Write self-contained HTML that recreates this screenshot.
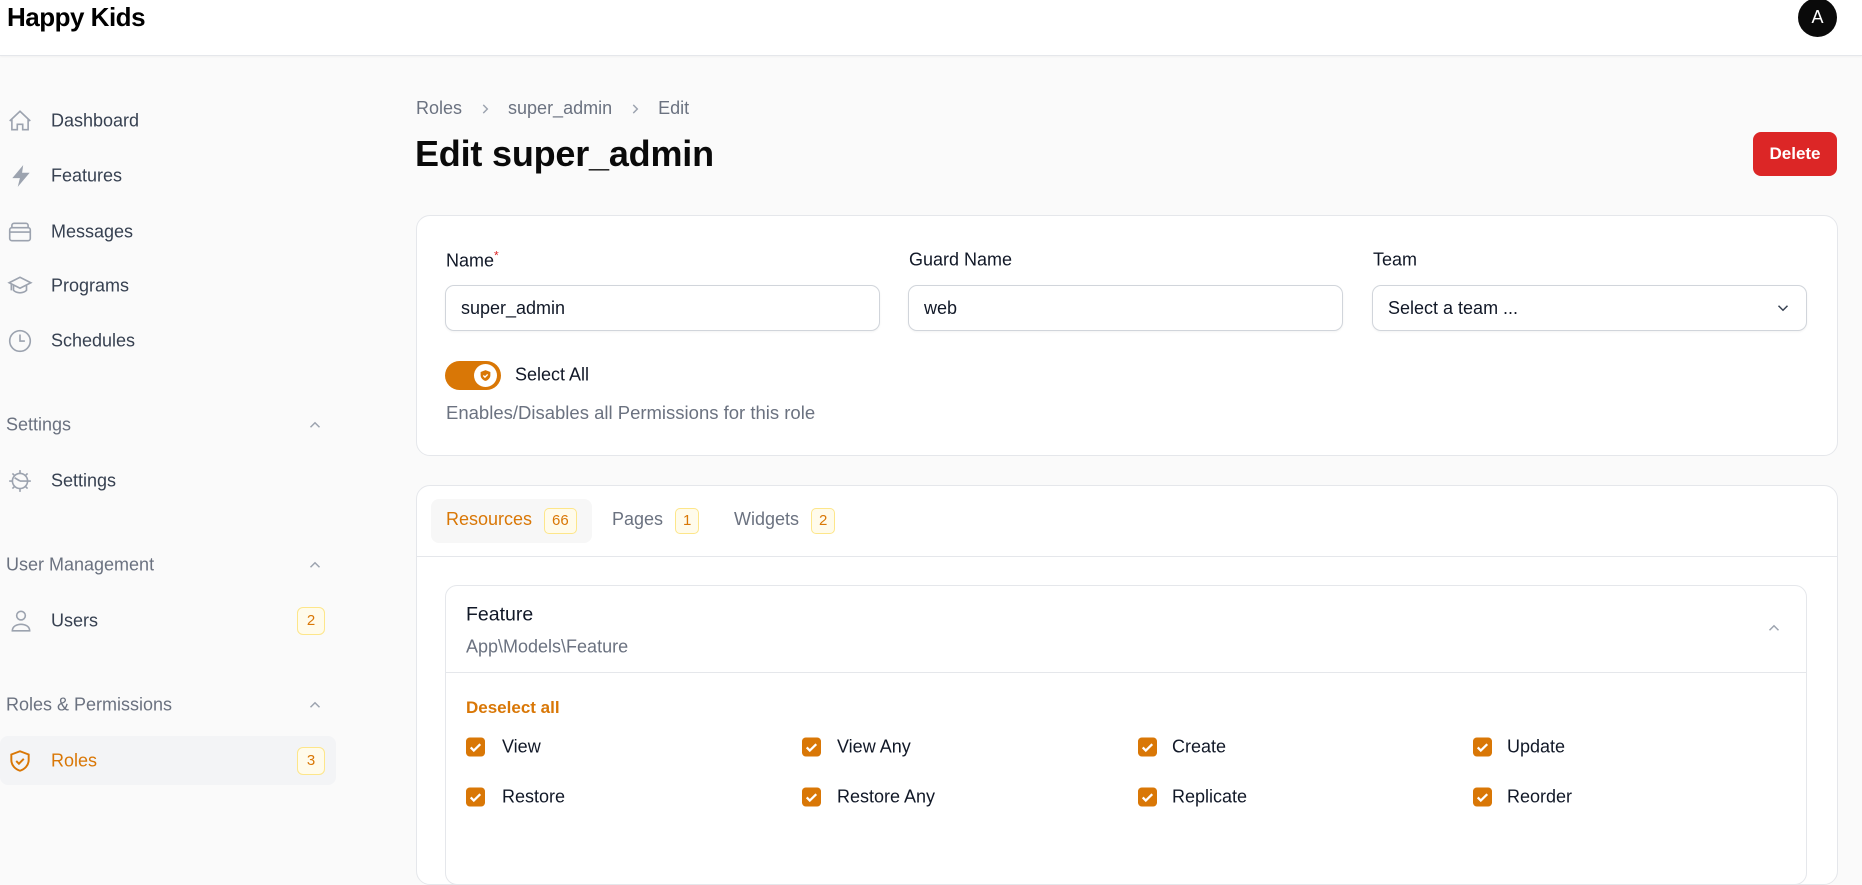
<!DOCTYPE html>
<html><head><meta charset="utf-8"><style>
*{box-sizing:border-box;margin:0;padding:0}
body{width:1862px;height:823px;overflow:hidden;background:#fafafa;font-family:"Liberation Sans",sans-serif;color:#111827;position:relative}
.abs{position:absolute}
.hdr{left:0;top:0;width:1862px;height:56px;background:#fff;border-bottom:1px solid #e5e7eb;box-shadow:0 1px 2px rgba(0,0,0,.04)}
.logo{left:7px;top:2px;font-size:26px;font-weight:bold;color:#000;letter-spacing:-0.5px}
.av{left:1798px;top:-2px;width:39px;height:39px;border-radius:50%;background:#0a0a0a;color:#fff;font-size:18px;text-align:center;line-height:39px}
.nav{font-size:18px;color:#374151;transform:translateY(-50%)}
.ico{transform:translateY(-50%)}
.grp{font-size:18px;color:#6b7280;transform:translateY(-50%)}
.chev{transform:translateY(-50%)}
.badge{transform:translateY(-50%);width:28px;height:28px;border:1px solid #fde68a;background:#fffbeb;border-radius:6px;color:#d97706;font-size:15px;text-align:center;line-height:26px}
.card{background:#fff;border:1px solid #e5e7eb;border-radius:14px}
.lbl{font-size:18px;color:#111827;transform:translateY(-50%)}
.inp{height:46px;border:1px solid #d1d5db;border-radius:9px;background:#fff;font-size:18px;padding-left:15px;line-height:44px;box-shadow:0 1px 2px rgba(0,0,0,.05)}
.cb{width:19px;height:19px;transform:translateY(-50%)}
.cbl{font-size:18px;color:#111827;transform:translateY(-50%)}
.tb{font-size:15px;border:1px solid #fde68a;background:#fffbeb;color:#d97706;border-radius:5px;padding:1px 7px;margin-left:12px;display:inline-block;line-height:22px}
</style></head><body>
<div class="abs hdr"></div>
<div class="abs logo">Happy Kids</div>
<div class="abs av">A</div>

<svg class="abs ico" style="left:7px;top:121px" width="26" height="26" viewBox="0 0 24 24" fill="none" stroke="#9ca3af" stroke-width="1.5"><path d="M2.5 12 12 3l9.5 9M4.5 10v10h5v-5h5v5h5V10"/></svg>
<div class="abs nav" style="left:51px;top:121px">Dashboard</div>
<svg class="abs ico" style="left:8px;top:176px" width="26" height="26" viewBox="0 0 24 24" fill="#9ca3af"><path d="M14 2 4 14h7l-2 8 11-13h-7z"/></svg>
<div class="abs nav" style="left:51px;top:176px">Features</div>
<svg class="abs ico" style="left:7px;top:232px" width="26" height="26" viewBox="0 0 24 24" fill="none" stroke="#9ca3af" stroke-width="1.5"><rect x="2.5" y="8" width="19" height="12" rx="2"/><path d="M4.5 8V6a2 2 0 0 1 2-2h11a2 2 0 0 1 2 2v2M2.5 12h19"/></svg>
<div class="abs nav" style="left:51px;top:232px">Messages</div>
<svg class="abs ico" style="left:7px;top:286px" width="26" height="26" viewBox="0 0 24 24" fill="none" stroke="#9ca3af" stroke-width="1.5"><path d="M2 9l10-5 10 5-10 5zM6 11v5c3 3 9 3 12 0v-5M4 10v6"/></svg>
<div class="abs nav" style="left:51px;top:286px">Programs</div>
<svg class="abs ico" style="left:7px;top:341px" width="26" height="26" viewBox="0 0 24 24" fill="none" stroke="#9ca3af" stroke-width="1.5"><circle cx="12" cy="12" r="9.5"/><path d="M12 6v6h4.5"/></svg>
<div class="abs nav" style="left:51px;top:341px">Schedules</div>

<div class="abs grp" style="left:6px;top:425px">Settings</div>
<svg class="abs chev" style="left:306px;top:425px" width="18" height="18" viewBox="0 0 24 24" fill="none" stroke="#9ca3af" stroke-width="2"><path d="M6 15l6-6 6 6"/></svg>
<svg class="abs ico" style="left:7px;top:481px" width="26" height="26" viewBox="0 0 24 24" fill="none" stroke="#9ca3af" stroke-width="1.5"><circle cx="12" cy="12" r="7"/><path d="M12 2v3M12 19v3M2 12h3M19 12h3M5 5l2 2M17 17l2 2M5 19l2-2M17 7l2-2M12 12l-5-3M12 12h7"/></svg>
<div class="abs nav" style="left:51px;top:481px">Settings</div>

<div class="abs grp" style="left:6px;top:565px">User Management</div>
<svg class="abs chev" style="left:306px;top:565px" width="18" height="18" viewBox="0 0 24 24" fill="none" stroke="#9ca3af" stroke-width="2"><path d="M6 15l6-6 6 6"/></svg>
<svg class="abs ico" style="left:8px;top:621px" width="26" height="26" viewBox="0 0 24 24" fill="none" stroke="#9ca3af" stroke-width="1.5"><circle cx="12" cy="7" r="4"/><path d="M4 21c0-4 4-6 8-6s8 2 8 6z"/></svg>
<div class="abs nav" style="left:51px;top:621px">Users</div>
<div class="abs badge" style="left:297px;top:621px">2</div>

<div class="abs grp" style="left:6px;top:705px">Roles &amp; Permissions</div>
<svg class="abs chev" style="left:306px;top:705px" width="18" height="18" viewBox="0 0 24 24" fill="none" stroke="#9ca3af" stroke-width="2"><path d="M6 15l6-6 6 6"/></svg>
<div class="abs" style="left:0;top:736px;width:336px;height:49px;background:#f3f4f6;border-radius:8px"></div>
<svg class="abs ico" style="left:7px;top:761px" width="26" height="26" viewBox="0 0 24 24" fill="none" stroke="#d97706" stroke-width="1.8"><path d="M12 3 4 6v5c0 5 3.5 8.5 8 10 4.5-1.5 8-5 8-10V6z"/><path d="M8.5 12l2.5 2.5 4.5-4.5"/></svg>
<div class="abs nav" style="left:51px;top:761px;color:#d97706">Roles</div>
<div class="abs badge" style="left:297px;top:761px">3</div>

<div class="abs" style="left:416px;top:98px;font-size:18px;color:#6b7280;display:flex;align-items:center">Roles<svg style="margin:0 16px" width="14" height="14" viewBox="0 0 24 24" fill="none" stroke="#9ca3af" stroke-width="2.5"><path d="M9 5l7 7-7 7"/></svg>super_admin<svg style="margin:0 16px" width="14" height="14" viewBox="0 0 24 24" fill="none" stroke="#9ca3af" stroke-width="2.5"><path d="M9 5l7 7-7 7"/></svg>Edit</div>
<div class="abs" style="left:415px;top:133px;font-size:36px;font-weight:bold;color:#0a0a0a;letter-spacing:-0.2px">Edit super_admin</div>
<div class="abs" style="left:1753px;top:132px;width:84px;height:44px;background:#dc2626;border-radius:8px;color:#fff;font-weight:bold;font-size:17px;text-align:center;line-height:44px">Delete</div>

<div class="abs card" style="left:416px;top:215px;width:1422px;height:241px"></div>
<div class="abs lbl" style="left:446px;top:260px">Name<sup style="color:#dc2626;font-size:12px">*</sup></div>
<div class="abs lbl" style="left:909px;top:260px">Guard Name</div>
<div class="abs lbl" style="left:1373px;top:260px">Team</div>
<div class="abs inp" style="left:445px;top:285px;width:435px">super_admin</div>
<div class="abs inp" style="left:908px;top:285px;width:435px">web</div>
<div class="abs inp" style="left:1372px;top:285px;width:435px">Select a team ...</div>
<svg class="abs" style="left:1774px;top:299px" width="18" height="18" viewBox="0 0 24 24" fill="none" stroke="#374151" stroke-width="2"><path d="M6 9l6 6 6-6"/></svg>
<div class="abs" style="left:445px;top:361px;width:56px;height:29px;border-radius:15px;background:#d97706"></div>
<div class="abs" style="left:474px;top:364px;width:23px;height:23px;border-radius:50%;background:#fff"></div>
<svg class="abs" style="left:479px;top:369px" width="13" height="13" viewBox="0 0 24 24" fill="#d97706"><path d="M12 2 3 5.5v6c0 5 4 9 9 10.5 5-1.5 9-5.5 9-10.5v-6z"/><path d="M8 12l3 3 5-5" stroke="#fff" stroke-width="2.5" fill="none"/></svg>
<div class="abs lbl" style="left:515px;top:375px">Select All</div>
<div class="abs lbl" style="left:446px;top:413px;color:#6b7280;font-size:18.5px">Enables/Disables all Permissions for this role</div>

<div class="abs card" style="left:416px;top:485px;width:1422px;height:400px"></div>
<div class="abs" style="left:431px;top:499px;width:161px;height:44px;background:#f7f7f7;border-radius:8px"></div>
<div class="abs lbl" style="left:446px;top:521px;color:#d97706">Resources<span class="tb">66</span></div>
<div class="abs lbl" style="left:612px;top:521px;color:#6b7280">Pages<span class="tb">1</span></div>
<div class="abs lbl" style="left:734px;top:521px;color:#6b7280">Widgets<span class="tb">2</span></div>
<div class="abs" style="left:417px;top:556px;width:1420px;height:1px;background:#e5e7eb"></div>

<div class="abs card" style="left:445px;top:585px;width:1362px;height:300px;border-radius:12px"></div>
<div class="abs lbl" style="left:466px;top:615px;font-size:19.5px">Feature</div>
<div class="abs lbl" style="left:466px;top:647px;color:#6b7280">App\Models\Feature</div>
<svg class="abs" style="left:1765px;top:619px" width="18" height="18" viewBox="0 0 24 24" fill="none" stroke="#9ca3af" stroke-width="2"><path d="M6 15l6-6 6 6"/></svg>
<div class="abs" style="left:446px;top:672px;width:1360px;height:1px;background:#e5e7eb"></div>
<div class="abs lbl" style="left:466px;top:708px;color:#d97706;font-weight:bold;font-size:17px">Deselect all</div>

<svg width="0" height="0" style="position:absolute"><defs><symbol id="ck" viewBox="0 0 20 20"><rect width="20" height="20" rx="4" fill="#d97706"/><path d="M5 10.5l3.2 3.2L15 7" stroke="#fff" stroke-width="2.4" fill="none"/></symbol></defs></svg>
<svg class="abs cb" style="left:466px;top:747px"><use href="#ck"/></svg><div class="abs cbl" style="left:502px;top:747px">View</div>
<svg class="abs cb" style="left:802px;top:747px"><use href="#ck"/></svg><div class="abs cbl" style="left:837px;top:747px">View Any</div>
<svg class="abs cb" style="left:1138px;top:747px"><use href="#ck"/></svg><div class="abs cbl" style="left:1172px;top:747px">Create</div>
<svg class="abs cb" style="left:1473px;top:747px"><use href="#ck"/></svg><div class="abs cbl" style="left:1507px;top:747px">Update</div>
<svg class="abs cb" style="left:466px;top:797px"><use href="#ck"/></svg><div class="abs cbl" style="left:502px;top:797px">Restore</div>
<svg class="abs cb" style="left:802px;top:797px"><use href="#ck"/></svg><div class="abs cbl" style="left:837px;top:797px">Restore Any</div>
<svg class="abs cb" style="left:1138px;top:797px"><use href="#ck"/></svg><div class="abs cbl" style="left:1172px;top:797px">Replicate</div>
<svg class="abs cb" style="left:1473px;top:797px"><use href="#ck"/></svg><div class="abs cbl" style="left:1507px;top:797px">Reorder</div>
</body></html>
